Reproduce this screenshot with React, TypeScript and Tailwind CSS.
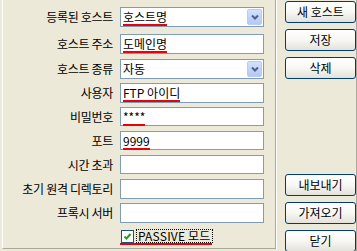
import { ReactNode } from 'react'

type Row = {
  label: string
  kind: 'select' | 'input'
  value?: string
  mark?: boolean
  rowClass: string
}

const ROWS: Row[] = [
  { label: '등록된 호스트', kind: 'select', value: '호스트명', mark: true, rowClass: 'mt-[7px] h-[20px]' },
  { label: '호스트 주소', kind: 'input', value: '도메인명', mark: true, rowClass: 'mt-[7px] h-[20px]' },
  { label: '호스트 종류', kind: 'select', value: '자동', rowClass: 'mt-[5px] h-[20px]' },
  { label: '사용자', kind: 'input', value: 'FTP 아이디', mark: true, rowClass: 'mt-[4px] h-[20px]' },
  { label: '비밀번호', kind: 'input', value: '****', mark: true, rowClass: 'mt-[4px] h-[19px]' },
  { label: '포트', kind: 'input', value: '9999', mark: true, rowClass: 'mt-[5px] h-[19px]' },
  { label: '시간 초과', kind: 'input', rowClass: 'mt-[5px] h-[19px]' },
  { label: '초기 원격 디렉토리', kind: 'input', rowClass: 'mt-[5px] h-[20px]' },
  { label: '프록시 서버', kind: 'input', rowClass: 'mt-[4px] h-[20px]' },
]

function Marked({ children }: { children: ReactNode }) {
  // red hand-drawn underline from the original screenshot
  return (
    <span className="relative inline-block">
      {children}
      <span className="absolute left-0 right-0 top-full mt-[1px] h-[2px] bg-[#e8000b]" />
    </span>
  )
}

function XpButton({ children }: { children: ReactNode }) {
  return (
    <button
      type="button"
      className="h-[22px] w-[71px] rounded-[3px] border border-[#003c74] bg-linear-to-b from-white via-[#f7f7f4] to-[#e3e2da] text-[12px] leading-none text-black"
    >
      {children}
    </button>
  )
}

export default function App() {
  return (
    <div className="flex h-[251px] w-[357px] overflow-hidden bg-[#ece9d8] font-['Noto_Sans_CJK_KR',sans-serif] text-[12px] text-black">
      {/* form panel */}
      <div className="ml-[2px] flex h-[249px] w-[274px] flex-col border-b border-l border-r border-b-[#aca899] border-l-white border-r-[#aca899] pl-[1px]">
        {ROWS.map((r) => (
          <div key={r.label} className={`flex items-center ${r.rowClass}`}>
            <div className="w-[113px] shrink-0 whitespace-nowrap pr-[4px] text-right leading-none tracking-[-0.3px]">
              {r.label}
            </div>
            <div className="ml-[3px] flex h-full w-[144px] items-center border border-[#7f9db9] bg-white pl-[2px] leading-none">
              <span className="flex-1 whitespace-nowrap">
                {r.value && (r.mark ? <Marked>{r.value}</Marked> : r.value)}
              </span>
              {r.kind === 'select' && (
                <span className="mr-px flex h-[16px] w-[15px] items-center justify-center rounded-[2px] border border-[#b9cbf3] bg-linear-to-b from-[#d4e1fc] to-[#b3c8f7]">
                  <svg width="8" height="6" viewBox="0 0 8 6">
                    <path d="M1 1.5 L4 4.5 L7 1.5" fill="none" stroke="#4d6185" strokeWidth="2" />
                  </svg>
                </span>
              )}
            </div>
          </div>
        ))}

        <div className="mt-[6px] flex items-center pl-[117px]">
          <span className="flex h-[13px] w-[13px] items-center justify-center border border-[#1c5180] bg-white">
            <svg width="9" height="9" viewBox="0 0 9 9">
              <path d="M1.5 4.5 L3.5 6.5 L7.5 2" fill="none" stroke="#21a121" strokeWidth="2" />
            </svg>
          </span>
          <span className="relative ml-[2px] border border-dotted border-black px-px leading-[12px] tracking-[0.2px]">
            PASSIVE 모드
            <span className="absolute left-[-17px] right-0 top-full mt-[1px] h-[2px] bg-[#e8000b]" />
          </span>
        </div>
      </div>
      <div className="h-[249px] w-px bg-white" />

      {/* buttons */}
      <div className="flex h-full flex-1 flex-col justify-between border-r border-[#aca899] pl-[8px] pt-px">
        <div className="flex flex-col gap-[6px]">
          <XpButton>새 호스트</XpButton>
          <XpButton>저장</XpButton>
          <XpButton>삭제</XpButton>
        </div>
        <div className="mb-[-1px] flex flex-col gap-[6px]">
          <XpButton>내보내기</XpButton>
          <XpButton>가져오기</XpButton>
          <XpButton>닫기</XpButton>
        </div>
      </div>
    </div>
  )
}
